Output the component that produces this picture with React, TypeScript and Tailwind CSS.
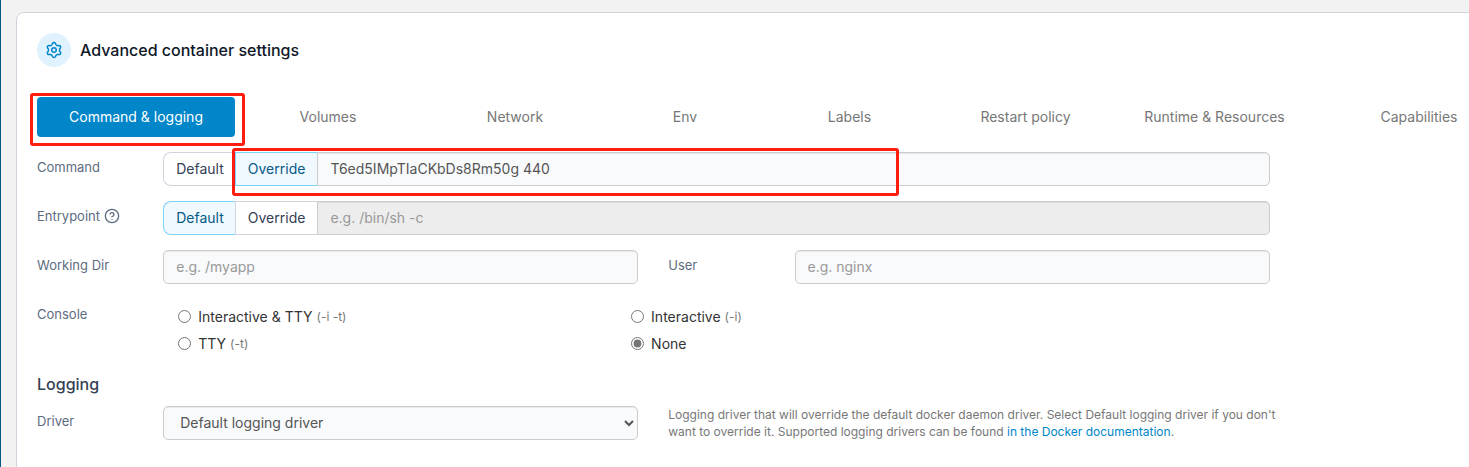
import React from "react";
import { CircleHelp } from "lucide-react";
import clsx from "clsx";

const tabs = [
  "Command & logging",
  "Volumes",
  "Network",
  "Env",
  "Labels",
  "Restart policy",
  "Runtime & Resources",
  "Capabilities",
];

const inputClass =
  "h-[34px] w-full min-w-0 rounded-[5px] border border-[#ccc] bg-[#f9fafc] px-3 pb-0.5 text-sm text-[#555] shadow-[inset_0_1px_1px_rgba(0,0,0,0.075)] placeholder:text-[#999] disabled:bg-[#ededed]";

function GearIcon() {
  return (
    <svg
      viewBox="0 0 24 24"
      fill="none"
      stroke="currentColor"
      strokeWidth="2"
      strokeLinecap="round"
      strokeLinejoin="round"
      className="size-[18px] text-[#0086c9]"
    >
      <path d="M9.4 19.4l.58 1.3a2.2 2.2 0 0 0 4.02 0l.58-1.3a2.42 2.42 0 0 1 2.47-1.42l1.42.15a2.2 2.2 0 0 0 2-3.48l-.83-1.15a2.42 2.42 0 0 1 0-2.84l.84-1.15a2.2 2.2 0 0 0-2.01-3.48l-1.42.15a2.42 2.42 0 0 1-2.47-1.43L14 3.3a2.2 2.2 0 0 0-4.02 0L9.4 4.75a2.42 2.42 0 0 1-2.47 1.43l-1.42-.15a2.2 2.2 0 0 0-2 3.48l.84 1.15a2.42 2.42 0 0 1 0 2.84l-.84 1.15a2.2 2.2 0 0 0 2 3.48l1.42-.15a2.42 2.42 0 0 1 2.47 1.42z" />
      <circle cx="12" cy="12" r="3" />
    </svg>
  );
}

function Row({ children }: { children: React.ReactNode }) {
  return <div className="-mx-[15px] mb-[15px] grid grid-cols-12">{children}</div>;
}

function Label({ htmlFor, children }: { htmlFor: string; children: React.ReactNode }) {
  return (
    <label
      htmlFor={htmlFor}
      className="flex items-center gap-1 self-start pt-[5px] pl-[15px] text-[13px] leading-5 whitespace-nowrap text-[#5d6b82]"
    >
      {children}
    </label>
  );
}

function Highlight({ className }: { className: string }) {
  return (
    <span
      className={clsx("pointer-events-none absolute z-10 rounded-[3px] border-3 border-[#ff1d10]", className)}
    />
  );
}

function ToggleButton({ active, className, children }: { active: boolean; className?: string; children: string }) {
  return (
    <button
      type="button"
      aria-pressed={active}
      className={clsx(
        "h-[34px] shrink-0 border px-3 text-sm",
        active ? "border-[#7cd4fd] bg-[#f0f9ff] text-[#065986]" : "border-[#d0d5dd] bg-white text-[#344054]",
        className
      )}
    >
      {children}
    </button>
  );
}

type OverrideInputProps = {
  id: string;
  override: boolean;
  value?: string;
  placeholder?: string;
  children?: React.ReactNode;
};

function OverrideInput({ id, override, value, placeholder, children }: OverrideInputProps) {
  return (
    <div className="relative mx-[15px] flex">
      <ToggleButton active={!override} className="rounded-l-lg border-r-0">
        Default
      </ToggleButton>
      <ToggleButton active={override} className="-ml-px border-r-0">
        Override
      </ToggleButton>
      <input
        id={id}
        type="text"
        defaultValue={value}
        placeholder={placeholder}
        disabled={!override}
        className={clsx(inputClass, "rounded-l-none")}
      />
      {children}
    </div>
  );
}

function ConsoleOption({ label, flags, checked }: { label: string; flags?: string; checked?: boolean }) {
  return (
    <label className="flex h-[27px] items-center text-sm text-[#333]">
      <input type="radio" name="console" defaultChecked={checked} className="mr-[7px] size-[13px] accent-[#767676]" />
      {label}
      {flags && <span className="ml-1 text-xs text-[#777]">{flags}</span>}
    </label>
  );
}

export default function App() {
  return (
    <div className="min-h-screen overflow-hidden border-l border-[#065986] bg-[#f2f2f2] pt-3 pl-[15px] font-['Inter',sans-serif]">
      <section className="-mr-[74px] min-h-screen rounded-lg border border-[#d0d5dd] bg-white p-5">
        <header className="mb-[30px] flex items-center gap-[9px]">
          <span className="flex size-[34px] items-center justify-center rounded-full bg-[#e0f2fe]">
            <GearIcon />
          </span>
          <h1 className="text-base font-medium text-[#101828]">Advanced container settings</h1>
        </header>

        <nav className="mb-[15px] grid grid-cols-[198fr_186fr_188fr_152fr_177fr_175fr_203fr_206fr]">
          {tabs.map((tab, i) => (
            <button
              key={tab}
              type="button"
              className={clsx("relative h-10 rounded text-sm", i === 0 ? "bg-[#0086c9] text-white" : "text-[#777]")}
            >
              {tab}
              {i === 0 && <Highlight className="-top-1 -right-[10px] -bottom-[9px] -left-[7px]" />}
            </button>
          ))}
        </nav>

        <form>
          <Row>
            <Label htmlFor="command">Command</Label>
            <div className="col-span-9">
              <OverrideInput id="command" override value="T6ed5IMpTIaCKbDs8Rm50g 440">
                <Highlight className="-top-1 -bottom-[10px] left-[69px] w-[667px]" />
              </OverrideInput>
            </div>
          </Row>

          <Row>
            <Label htmlFor="entrypoint">
              Entrypoint
              <CircleHelp className="size-4" />
            </Label>
            <div className="col-span-9">
              <OverrideInput id="entrypoint" override={false} placeholder="e.g. /bin/sh -c" />
            </div>
          </Row>

          <Row>
            <Label htmlFor="workdir">Working Dir</Label>
            <div className="col-span-4 px-[15px]">
              <input id="workdir" type="text" placeholder="e.g. /myapp" className={inputClass} />
            </div>
            <Label htmlFor="user">User</Label>
            <div className="col-span-4 px-[15px]">
              <input id="user" type="text" placeholder="e.g. nginx" className={inputClass} />
            </div>
          </Row>

          <div role="radiogroup" aria-labelledby="console-label" className="-mx-[15px] mb-[17px] grid grid-cols-12">
            <span id="console-label" className="pt-[5px] pl-[15px] text-[13px] leading-5 text-[#5d6b82]">
              Console
            </span>
            <div className="col-span-9 grid grid-cols-[83fr_117fr] pt-1 pr-[15px] pl-[30px]">
              <ConsoleOption label="Interactive & TTY" flags="(-i -t)" />
              <ConsoleOption label="Interactive" flags="(-i)" />
              <ConsoleOption label="TTY" flags="(-t)" />
              <ConsoleOption label="None" checked />
            </div>
          </div>

          <h2 className="mb-3 text-base leading-5 font-medium text-[#344054]">Logging</h2>

          <Row>
            <Label htmlFor="driver">Driver</Label>
            <div className="col-span-4 px-[15px]">
              <select id="driver" className={inputClass}>
                <option>Default logging driver</option>
              </select>
            </div>
            <p className="col-span-5 pl-[15px] text-xs leading-[17px] text-[#777]">
              Logging driver that will override the default docker daemon driver. Select Default logging driver if you
              don't want to override it. Supported logging drivers can be found{" "}
              <a href="#logging-drivers" className="text-[#0086c9]">
                in the Docker documentation
              </a>
              .
            </p>
          </Row>
        </form>
      </section>
    </div>
  );
}
